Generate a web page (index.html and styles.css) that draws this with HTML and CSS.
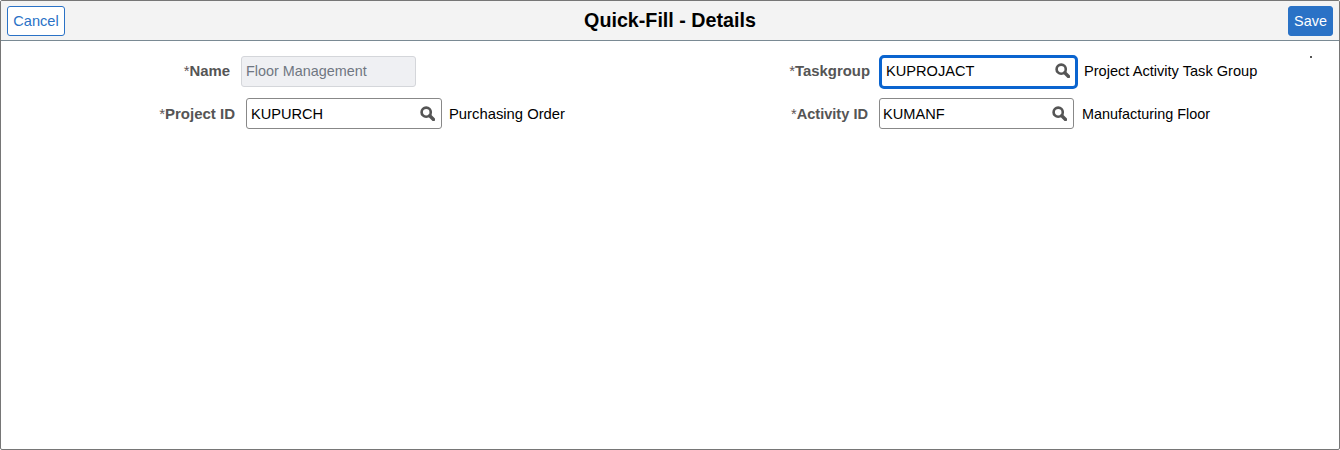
FILE: index.html
```html
<!DOCTYPE html>
<html lang="en">
<head>
    <meta charset="UTF-8">
    <title>Quick-Fill - Details</title>
    <link rel="stylesheet" href="styles.css">
</head>
<body>
    <div class="page">
        <header class="banner">
            <button class="btn btn-cancel">Cancel</button>
            <h1>Quick-Fill - Details</h1>
            <button class="btn btn-save">Save</button>
        </header>

        <main class="details">
            <span class="dot"></span>

            <div class="column column-left">
                <div class="field field-first field-name">
                    <label><span class="req">*</span>Name</label>
                    <div class="input input-disabled">Floor Management</div>
                </div>
                <div class="field field-project">
                    <label><span class="req">*</span>Project ID</label>
                    <div class="input input-lookup">
                        <span>KUPURCH</span>
                        <svg class="search" viewBox="0 0 16 16"><circle cx="6.6" cy="6.6" r="4.9"/><line x1="10.4" y1="10.4" x2="14.4" y2="14.4"/></svg>
                    </div>
                    <span class="desc">Purchasing Order</span>
                </div>
            </div>

            <div class="column column-right">
                <div class="field field-first field-task">
                    <label><span class="req">*</span>Taskgroup</label>
                    <div class="input input-lookup input-focus">
                        <span>KUPROJACT</span>
                        <svg class="search" viewBox="0 0 16 16"><circle cx="6.6" cy="6.6" r="4.9"/><line x1="10.4" y1="10.4" x2="14.4" y2="14.4"/></svg>
                    </div>
                    <span class="desc">Project Activity Task Group</span>
                </div>
                <div class="field field-activity">
                    <label><span class="req">*</span>Activity ID</label>
                    <div class="input input-lookup">
                        <span>KUMANF</span>
                        <svg class="search" viewBox="0 0 16 16"><circle cx="6.6" cy="6.6" r="4.9"/><line x1="10.4" y1="10.4" x2="14.4" y2="14.4"/></svg>
                    </div>
                    <span class="desc">Manufacturing Floor</span>
                </div>
            </div>
        </main>
    </div>
</body>
</html>
```

FILE: styles.css
```css
* {
    margin: 0;
    padding: 0;
    box-sizing: border-box;
    font-family: "Liberation Sans", Arial, sans-serif;
}

body {
    background: white;
}

.page {
    width: 1340px;
    height: 450px;
    border: 1px solid #767676;
    border-radius: 2px;
    overflow: hidden;
}

.banner {
    height: 40px;
    background: #f3f3f3;
    border-bottom: 1px solid #7a8a94;
    padding: 5px 6px 0;
    display: flex;
    justify-content: space-between;
    align-items: flex-start;
    position: relative;
}

h1 {
    position: absolute;
    left: 0;
    right: 0;
    top: 8px;
    text-align: center;
    font-size: 19.7px;
    line-height: 23px;
    font-weight: bold;
    color: #000;
}

.btn {
    height: 30px;
    border: 1px solid #2a72c6;
    border-radius: 3px;
    font-size: 14.4px;
    position: relative;
    z-index: 1;
}

.btn-cancel {
    width: 58px;
    background: white;
    color: #2a72c6;
    font-size: 14.6px;
}

.btn-save {
    width: 45px;
    background: #2a72c6;
    color: white;
}

.details {
    position: relative;
    display: flex;
    padding-top: 15px;
}

.dot {
    position: absolute;
    left: 1309px;
    top: 15px;
    width: 2px;
    height: 2px;
    background: #555;
}

.column {
    display: flex;
    flex-direction: column;
    gap: 11px;
}

.column-left {
    width: 634px;
}

.field {
    display: flex;
    align-items: center;
    height: 31px;
    font-size: 14.6px;
}

label {
    flex: none;
    text-align: right;
    font-size: 14.9px;
    font-weight: bold;
    color: #555;
}

.req {
    font-weight: normal;
    color: #5f5555;
}

.field-name label { width: 229px; margin-right: 11px; }
.field-project label { width: 234px; margin-right: 11px; font-size: 15px; }
.field-task label { width: 235px; margin-right: 9px; }
.field-activity label { width: 233px; margin-right: 11px; font-size: 14.6px; }

.input {
    height: 31px;
    border: 1px solid #888;
    border-radius: 3px;
    padding: 0 4px;
    display: flex;
    align-items: center;
    justify-content: space-between;
    color: #000;
    background: white;
}

.input-disabled {
    width: 175px;
    background: #eff0f3;
    border-color: #d4d6da;
    color: #6f7782;
    font-size: 14.4px;
}

.input-lookup {
    width: 196px;
    margin-right: 7px;
    padding-right: 6px;
}

.field-activity .input {
    width: 195px;
    margin-right: 8px;
    padding-left: 3px;
}

.input-focus {
    width: 199px;
    height: 34px;
    border: 3px solid #0a64cf;
    border-radius: 5px;
    margin-right: 6px;
    padding-left: 4px;
    padding-right: 5px;
}

/* text in the top row sits a pixel above the box centre */
.field-first label,
.field-first .desc,
.field-first .input {
    padding-bottom: 2px;
}

.search {
    width: 15px;
    height: 15px;
    fill: none;
    stroke: #555;
}

.search circle {
    stroke-width: 2.8;
}

.search line {
    stroke-width: 3.6;
    stroke-linecap: round;
}

.desc {
    color: #000;
}

.field-project .desc {
    font-size: 14.8px;
}

.field-activity .desc {
    font-size: 14.4px;
}
```
